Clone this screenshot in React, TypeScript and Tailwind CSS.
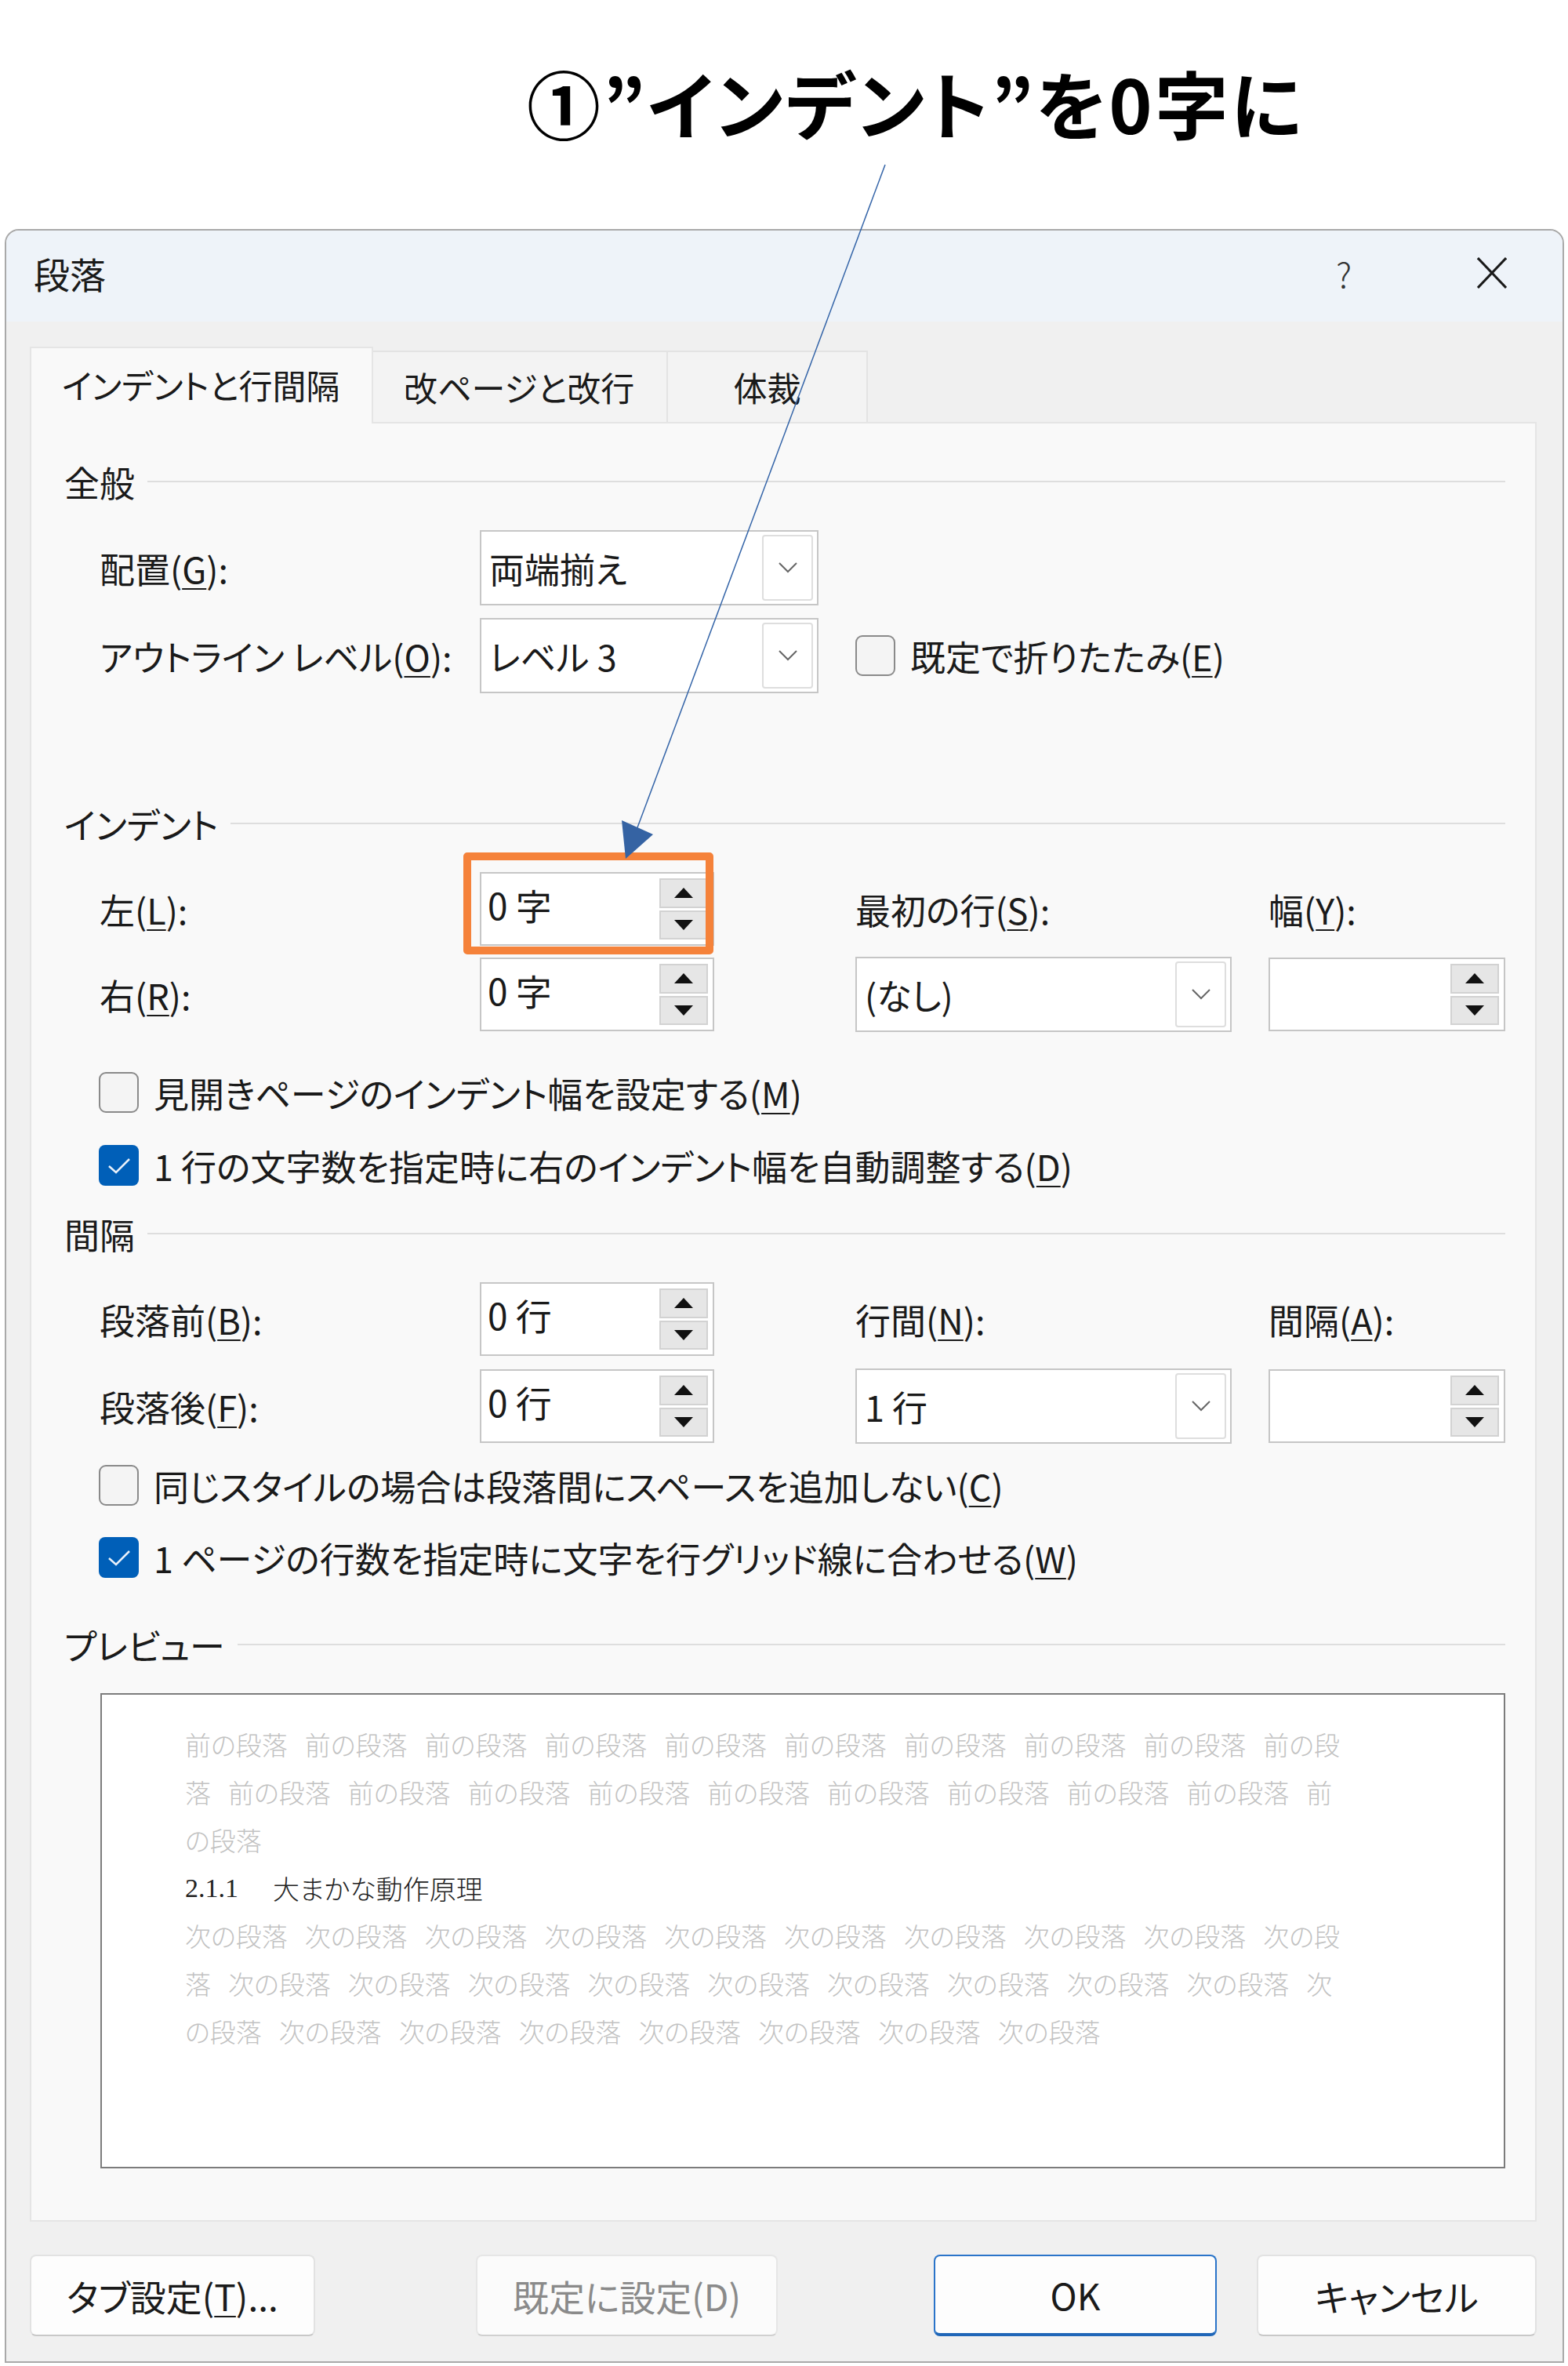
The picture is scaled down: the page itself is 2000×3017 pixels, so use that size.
import React from "react";

const U = ({ c }: { c: string }) => (
  <span className="underline decoration-[2px] underline-offset-[6px]">{c}</span>
);

function Tri({ up }: { up: boolean }) {
  return (
    <svg width="24" height="13" viewBox="0 0 24 13">
      <polygon points={up ? "12,0 24,13 0,13" : "0,0 24,0 12,13"} fill="#111" />
    </svg>
  );
}

function Spin({ value, wide }: { value?: string; wide?: boolean }) {
  return (
    <div
      className={`${wide ? "w-[302px]" : "w-[299px]"} h-[94px] bg-white border-2 border-[#c6c6c6] flex items-stretch`}
    >
      <div className="flex-1 flex items-center pl-[8px] pb-[12px] text-[46px] whitespace-nowrap">{value}</div>
      <div className="w-[62px] mr-[6px] my-[6px] flex flex-col gap-[3px]">
        <div className="flex-1 bg-[#e6e6e6] border-2 border-[#d2d2d2] flex items-center justify-center">
          <Tri up />
        </div>
        <div className="flex-1 bg-[#e6e6e6] border-2 border-[#d2d2d2] flex items-center justify-center">
          <Tri up={false} />
        </div>
      </div>
    </div>
  );
}

function Select({ value, wide }: { value: string; wide?: boolean }) {
  return (
    <div
      className={`${wide ? "w-[480px]" : "w-[432px]"} h-[96px] bg-white border-2 border-[#c6c6c6] flex items-stretch`}
    >
      <div className="flex-1 flex items-center pl-[10px] text-[45px] whitespace-nowrap">{value}</div>
      <div className="w-[65px] my-[4px] mr-[5px] border-2 border-[#dedede] rounded-[4px] bg-white flex items-center justify-center">
        <svg width="24" height="14" viewBox="0 0 24 14">
          <polyline points="1,1 12,12 23,1" fill="none" stroke="#666" strokeWidth="2" />
        </svg>
      </div>
    </div>
  );
}

function Check({ checked }: { checked?: boolean }) {
  return checked ? (
    <div className="w-[51px] h-[52px] rounded-[8px] bg-[#005fb8] shrink-0">
      <svg width="51" height="52" viewBox="0 0 51 52">
        <polyline points="13,27 22,35 39,18" fill="none" stroke="#e8f0fa" strokeWidth="2.5" />
      </svg>
    </div>
  ) : (
    <div className="w-[51px] h-[52px] rounded-[9px] bg-[#f4f4f4] border-2 border-[#8a8a8a] shrink-0" />
  );
}

function Heading({ text, mt }: { text: string; mt: string }) {
  return (
    <div className={`${mt} h-[50px] ml-[42px] mr-[38px] flex items-center gap-[16px]`}>
      <span className="text-[45px] leading-none whitespace-nowrap">{text}</span>
      <div className="flex-1 h-[2px] bg-[#dedede]" />
    </div>
  );
}

function CheckRow({ checked, mt, children }: { checked?: boolean; mt: string; children: React.ReactNode }) {
  return (
    <div className={`${mt} h-[52px] ml-[86px] flex items-center gap-[19px]`}>
      <Check checked={checked} />
      <span className="text-[45px] leading-none whitespace-nowrap">{children}</span>
    </div>
  );
}

function Btn({ children, cls }: { children: React.ReactNode; cls: string }) {
  return (
    <div className={`${cls} h-[104px] rounded-[8px] flex items-center justify-center text-[46px] leading-none whitespace-nowrap`}>
      {children}
    </div>
  );
}

const prev = "前の段落";
const next = "次の段落";

function PLine({ words, dark }: { words: string[]; dark?: boolean }) {
  return (
    <div
      className={`h-[61px] flex items-center gap-[22px] text-[33px] leading-none whitespace-nowrap font-light ${
        dark ? "text-[#222]" : "text-[#c2c2c2]"
      }`}
    >
      {words.map((w, i) => (
        <span key={i}>{w}</span>
      ))}
    </div>
  );
}

export default function App() {
  const nine = (w: string) => Array.from({ length: 9 }, () => w);
  const seven = (w: string) => Array.from({ length: 7 }, () => w);
  return (
    <div className="relative w-[2000px] h-[3017px] bg-white overflow-hidden font-['Noto_Sans_CJK_JP',sans-serif] text-[#1a1a1a] [font-feature-settings:'palt']">
      {/* annotation title */}
      <div className="h-[292px] pl-[672px] pt-[83px]">
        <div className="text-[94px] leading-none font-bold text-black whitespace-nowrap tracking-[3px]">①”インデント”を0字に</div>
      </div>

      {/* dialog */}
      <div className="ml-[6px] w-[1989px] h-[2721px] rounded-t-[18px] border-2 border-[#a9a9a9] bg-[#f0f0f0] overflow-hidden">
        {/* title bar */}
        <div className="h-[116px] bg-[#eef3f9] flex items-center pl-[35px] pr-[71px] pb-[8px]">
          <span className="text-[46px] leading-none">段落</span>
          <span className="ml-auto mr-[160px] text-[44px] font-light leading-none text-[#333]">?</span>
          <svg width="38" height="40" viewBox="0 0 38 40">
            <line x1="1" y1="1" x2="37" y2="39" stroke="#1a1a1a" strokeWidth="3" />
            <line x1="37" y1="1" x2="1" y2="39" stroke="#1a1a1a" strokeWidth="3" />
          </svg>
        </div>

        {/* tabs */}
        <div className="flex items-end h-[96px] mt-[32px] ml-[30px]">
          <div className="relative z-10 -mb-[2px] w-[438px] h-[98px] bg-[#f9f9f9] border-2 border-b-0 border-[#e5e5e5] flex items-center pl-[39px] pb-[4px] text-[43px] leading-none whitespace-nowrap">
            インデントと行間隔
          </div>
          <div className="w-[376px] h-[91px] bg-[#f3f3f3] border-2 border-l-0 border-b-0 border-[#e3e3e3] flex items-center pl-[39px] text-[43px] leading-none whitespace-nowrap">
            改ページと改行
          </div>
          <div className="w-[255px] h-[91px] bg-[#f3f3f3] border-2 border-l-0 border-b-0 border-[#e3e3e3] flex items-center justify-center text-[43px] leading-none whitespace-nowrap">
            体裁
          </div>
        </div>

        {/* panel */}
        <div className="ml-[30px] w-[1922px] h-[2295px] bg-[#f9f9f9] border-2 border-[#e5e5e5] text-[45px] leading-none">
          <Heading text="全般" mt="mt-[49px]" />

          <div className="mt-[37px] h-[96px] ml-[87px] flex items-center">
            <div className="w-[485px] whitespace-nowrap">
              配置(<U c="G" />):
            </div>
            <Select value="両端揃え" />
          </div>

          <div className="mt-[16px] h-[96px] ml-[87px] flex items-center">
            <div className="w-[485px] whitespace-nowrap">
              アウトライン レベル(<U c="O" />):
            </div>
            <div className="w-[479px]">
              <Select value="レベル 3" />
            </div>
            <div className="flex items-center gap-[19px]">
              <Check />
              <span className="whitespace-nowrap">
                既定で折りたたみ(<U c="E" />)
              </span>
            </div>
          </div>

          <Heading text="インデント" mt="mt-[141px]" />

          <div className="mt-[37px] h-[94px] ml-[87px] flex items-center">
            <div className="w-[485px] whitespace-nowrap">
              左(<U c="L" />):
            </div>
            <div className="w-[479px]">
              <Spin value="0 字" />
            </div>
            <div className="w-[527px] whitespace-nowrap">
              最初の行(<U c="S" />):
            </div>
            <div className="whitespace-nowrap">
              幅(<U c="Y" />):
            </div>
          </div>

          <div className="mt-[14px] h-[96px] ml-[87px] flex items-center">
            <div className="w-[485px] whitespace-nowrap">
              右(<U c="R" />):
            </div>
            <div className="w-[479px]">
              <Spin value="0 字" />
            </div>
            <div className="w-[527px]">
              <Select value="(なし)" wide />
            </div>
            <Spin wide />
          </div>

          <CheckRow mt="mt-[51px]">
            見開きページのインデント幅を設定する(<U c="M" />)
          </CheckRow>
          <CheckRow mt="mt-[41px]" checked>
            1 行の文字数を指定時に右のインデント幅を自動調整する(<U c="D" />)
          </CheckRow>

          <Heading text="間隔" mt="mt-[36px]" />

          <div className="mt-[37px] h-[94px] ml-[87px] flex items-center">
            <div className="w-[485px] whitespace-nowrap">
              段落前(<U c="B" />):
            </div>
            <div className="w-[479px]">
              <Spin value="0 行" />
            </div>
            <div className="w-[527px] whitespace-nowrap">
              行間(<U c="N" />):
            </div>
            <div className="whitespace-nowrap">
              間隔(<U c="A" />):
            </div>
          </div>

          <div className="mt-[16px] h-[96px] ml-[87px] flex items-center">
            <div className="w-[485px] whitespace-nowrap">
              段落後(<U c="F" />):
            </div>
            <div className="w-[479px]">
              <Spin value="0 行" />
            </div>
            <div className="w-[527px]">
              <Select value="1 行" wide />
            </div>
            <Spin wide />
          </div>

          <CheckRow mt="mt-[27px]">
            同じスタイルの場合は段落間にスペースを追加しない(<U c="C" />)
          </CheckRow>
          <CheckRow mt="mt-[40px]" checked>
            1 ページの行数を指定時に文字を行グリッド線に合わせる(<U c="W" />)
          </CheckRow>

          <Heading text="プレビュー" mt="mt-[60px]" />

          <div className="mt-[37px] ml-[88px] w-[1792px] h-[606px] bg-white border-2 border-[#7c7c7c] pl-[106px] pt-[33px]">
            <PLine words={[...nine(prev), "前の段"]} />
            <PLine words={["落", ...nine(prev), "前"]} />
            <PLine words={["の段落"]} />
            <div className="h-[61px] flex items-center text-[34px] leading-none whitespace-nowrap text-[#222]">
              <span className="font-['Liberation_Serif',serif] w-[112px]">2.1.1</span>
              <span className="font-light">大まかな動作原理</span>
            </div>
            <PLine words={[...nine(next), "次の段"]} />
            <PLine words={["落", ...nine(next), "次"]} />
            <PLine words={["の段落", ...seven(next)]} />
          </div>
        </div>

        {/* buttons */}
        <div className="flex mt-[42px] ml-[30px]">
          <Btn cls="w-[364px] bg-[#fdfdfd] border-2 border-[#e2e2e2] border-b-[#c8c8c8]">
            タブ設定(<U c="T" />)...
          </Btn>
          <Btn cls="ml-[205px] w-[385px] bg-[#fbfbfb] border-2 border-[#e6e6e6] border-b-[#d0d0d0] text-[#8a8a8a]">
            既定に設定(D)
          </Btn>
          <Btn cls="ml-[199px] w-[361px] bg-[#fdfdfd] border-2 border-[#2a74c9] border-b-[4px] border-b-[#1f66b8]">
            OK
          </Btn>
          <Btn cls="ml-[51px] w-[357px] bg-[#fdfdfd] border-2 border-[#e2e2e2] border-b-[#c8c8c8]">
            キャンセル
          </Btn>
        </div>
      </div>

      {/* orange highlight */}
      <div className="absolute left-[591px] top-[1087px] w-[319px] h-[130px] border-[10px] border-[#f5823a] rounded-[5px]" />

      {/* arrow */}
      <svg className="absolute left-0 top-0 pointer-events-none" width="2000" height="3017" viewBox="0 0 2000 3017">
        <line x1="1129" y1="210" x2="812" y2="1058" stroke="#3565a8" strokeWidth="1.5" />
        <polygon points="793,1046 833,1064 798,1095" fill="#3563a3" />
      </svg>
    </div>
  );
}
